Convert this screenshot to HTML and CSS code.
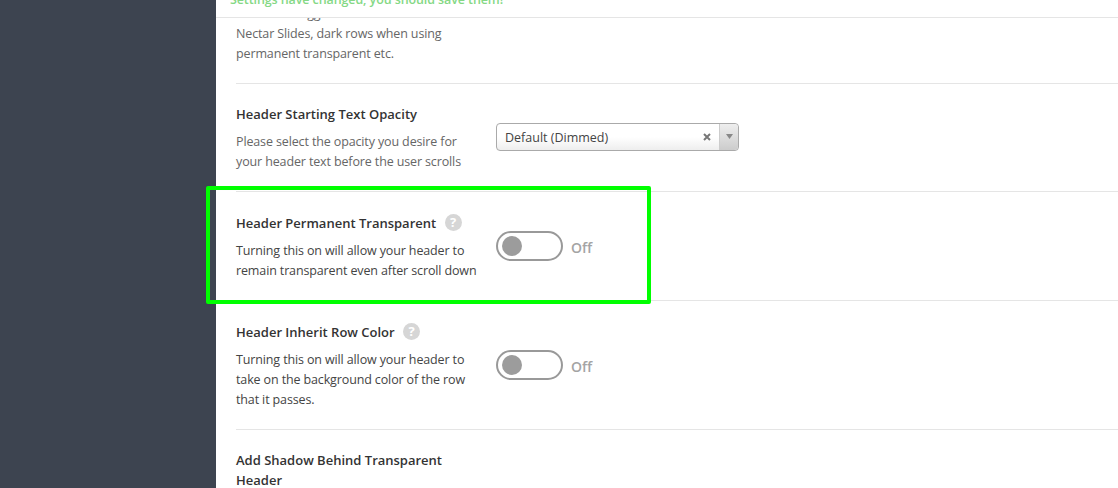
FILE: index.html
```html
<!DOCTYPE html>
<html lang="en">
<head>
    <meta charset="UTF-8">
    <meta name="viewport" content="width=device-width, initial-scale=1.0">
    <title>Header Settings</title>
    <link rel="stylesheet" href="styles.css">
</head>
<body>
    <div class="container">
        <!-- Sidebar -->
        <div class="sidebar"></div>

        <!-- Main Content -->
        <div class="content">
            <div class="save-notice">
                <p>Settings have changed, you should save them!</p>
            </div>

            <div class="options">
                <div class="option option-clipped">
                    <div class="option-label">
                        <p class="option-desc">Use when toggled with<br>Nectar Slides, dark rows when using<br>permanent transparent etc.</p>
                    </div>
                </div>

                <div class="option">
                    <div class="option-label">
                        <h3 class="option-title">Header Starting Text Opacity</h3>
                        <p class="option-desc">Please select the opacity you desire for your header text before the user scrolls</p>
                    </div>
                    <div class="select">
                        <span class="select-value">Default (Dimmed)</span>
                        <span class="select-clear">
                            <svg width="8" height="8" viewBox="0 0 8 8"><path d="M1 1l6 6M7 1l-6 6" stroke="#777" stroke-width="2"/></svg>
                        </span>
                        <span class="select-arrow">
                            <svg width="7" height="5" viewBox="0 0 7 5"><path d="M0 0h7L3.500 5z" fill="#888"/></svg>
                        </span>
                    </div>
                </div>

                <div class="option option-switch">
                    <div class="option-label">
                        <h3 class="option-title">Header Permanent Transparent <span class="help">?</span></h3>
                        <p class="option-desc option-desc-dark">Turning this on will allow your header to remain transparent even after scroll down</p>
                    </div>
                    <div class="switch-wrap">
                        <span class="switch"><span class="switch-knob"></span></span>
                        <span class="switch-text">Off</span>
                    </div>
                    <div class="highlight"></div>
                </div>

                <div class="option option-switch">
                    <div class="option-label">
                        <h3 class="option-title">Header Inherit Row Color <span class="help">?</span></h3>
                        <p class="option-desc option-desc-dark">Turning this on will allow your header to take on the background color of the row that it passes.</p>
                    </div>
                    <div class="switch-wrap">
                        <span class="switch"><span class="switch-knob"></span></span>
                        <span class="switch-text">Off</span>
                    </div>
                </div>

                <div class="option">
                    <div class="option-label">
                        <h3 class="option-title">Add Shadow Behind Transparent Header</h3>
                    </div>
                </div>
            </div>
        </div>
    </div>
</body>
</html>
```

FILE: styles.css
```css
:root {
    --sidebar-bg: #3d4450;
    --border-color: #e5e5e5;
    --text-title: #333;
    --text-muted: #666;
    --text-dark: #444;
    --switch-color: #999;
    --notice-green: #85d885;
    --highlight-green: #00ff00;
}

* {
    box-sizing: border-box;
    margin: 0;
    padding: 0;
}

html, body {
    height: 100%;
    overflow: hidden;
}

body {
    font-family: 'Open Sans', sans-serif;
    font-size: 13px;
    line-height: 20px;
    background-color: #fff;
}

.container {
    display: flex;
    height: 100%;
}

.sidebar {
    width: 216px;
    flex-shrink: 0;
    background-color: var(--sidebar-bg);
}

.content {
    flex: 1;
    min-width: 0;
}

.save-notice {
    height: 18px;
    padding-left: 14px;
    border-bottom: 1px solid var(--border-color);
    overflow: hidden;
}

.save-notice p {
    margin-top: -10px;
    font-size: 12.5px;
    font-weight: 600;
    letter-spacing: -0.1px;
    color: var(--notice-green);
}

.options {
    padding-left: 20px;
}

.option {
    position: relative;
    display: flex;
    align-items: center;
    gap: 16px;
    padding: 20px 0 19px;
    border-bottom: 1px solid var(--border-color);
}

.option-switch {
    padding-top: 21px;
}

.option-clipped {
    height: 66px;
    align-items: flex-end;
    padding: 0 0 19px;
    overflow: hidden;
}

.option-label {
    width: 244px;
    flex-shrink: 0;
}

.option-title {
    margin-bottom: 8px;
    font-size: 13px;
    font-weight: 600;
    color: var(--text-title);
}

.option-desc {
    font-size: 12.5px;
    letter-spacing: -0.13px;
    color: var(--text-muted);
}

.option-desc-dark {
    color: var(--text-dark);
}

.help {
    display: inline-block;
    width: 17px;
    height: 17px;
    margin-left: 5px;
    border-radius: 50%;
    background-color: #d6d6d6;
    color: #fff;
    font-size: 13px;
    font-weight: 700;
    line-height: 17px;
    text-align: center;
    vertical-align: 1px;
}

.select {
    display: flex;
    align-items: center;
    width: 243px;
    height: 28px;
    margin-top: -3px;
    padding-left: 8px;
    border: 1px solid #aaa;
    border-radius: 4px;
    background: linear-gradient(#fff 50%, #eee);
    font-size: 12.5px;
    color: #444;
}

.select-value {
    flex: 1;
    padding-top: 3px;
}

.select-clear {
    display: flex;
    margin-right: 8px;
}

.select-arrow {
    display: flex;
    align-items: center;
    justify-content: center;
    width: 19px;
    height: 100%;
    border-left: 1px solid #ccc;
    border-radius: 0 4px 4px 0;
    background: linear-gradient(#eee, #ccc);
}

.switch-wrap {
    display: flex;
    align-items: center;
    gap: 8px;
    margin-top: -2px;
}

.switch {
    display: flex;
    align-items: center;
    width: 67px;
    height: 30px;
    padding-left: 4px;
    border: 2px solid var(--switch-color);
    border-radius: 15px;
}

.switch-knob {
    width: 20px;
    height: 20px;
    border-radius: 50%;
    background-color: #9c9c9c;
}

.switch-text {
    padding-top: 4px;
    font-size: 14px;
    font-weight: 600;
    color: #a4a4a4;
}

/* green marker drawn over the option */
.highlight {
    position: absolute;
    left: -30px;
    top: -6px;
    width: 445px;
    height: 118px;
    border: 4px solid var(--highlight-green);
    border-radius: 2px;
    pointer-events: none;
}
```
